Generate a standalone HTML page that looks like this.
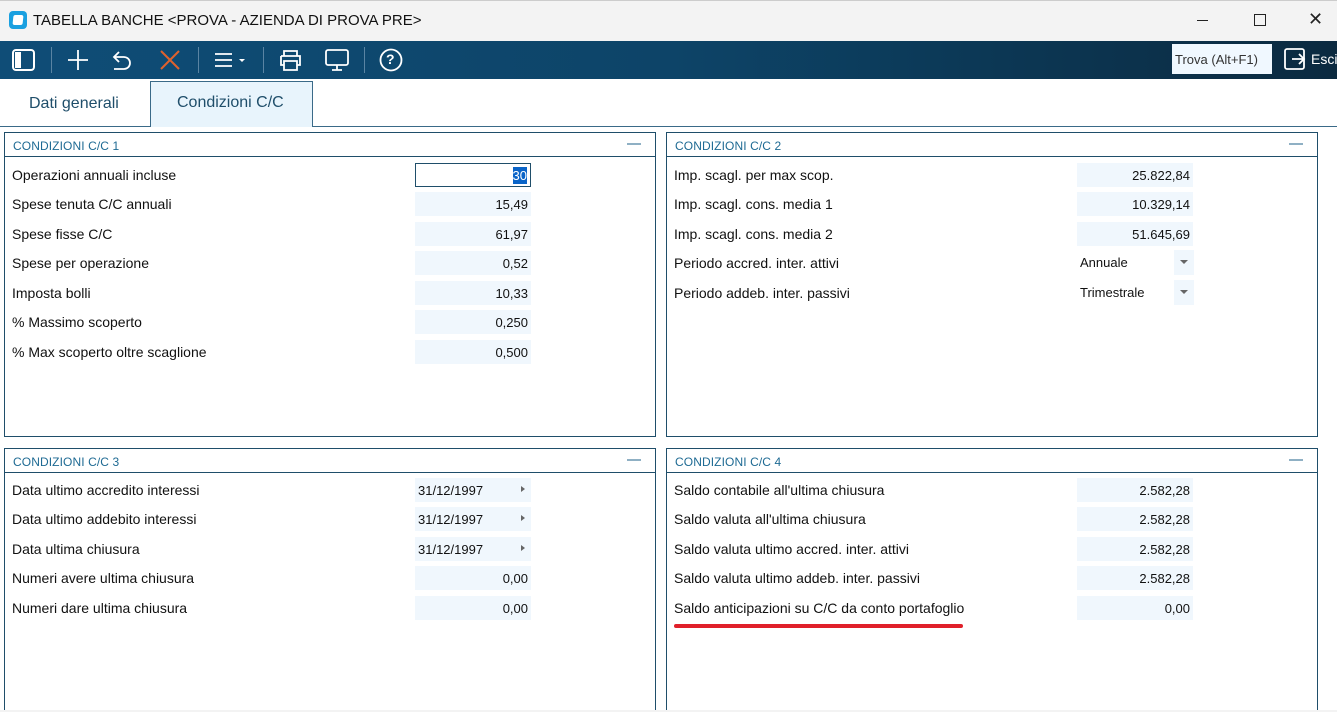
<!DOCTYPE html>
<html><head><meta charset="utf-8"><style>
*{margin:0;padding:0;box-sizing:border-box}
body{width:1337px;height:712px;overflow:hidden;background:#fff;font-family:"Liberation Sans",sans-serif;position:relative;color:#111}
.a{position:absolute}
.title{top:0;left:0;width:1337px;height:41px;background:#f3f3f3;border-top:1px solid #ccc}
.tb{top:41px;left:0;width:1337px;height:38px;background:linear-gradient(90deg,#0f4d77 0%,#0d4468 50%,#0b2a40 100%)}
.sep{top:47px;width:1px;height:26px;background:#5a84a3}
.panel{border:1px solid #1f4e6a;background:#fff}
.ph{position:absolute;left:0;right:0;top:0;height:24px;border-bottom:1px solid #1f4e6a;font-size:12px;color:#1e6a93;padding:6px 0 0 8px;letter-spacing:.1px}
.min{position:absolute;right:14px;top:10px;width:14px;height:2px;background:#8fb0c4}
.lbl{position:absolute;font-size:14px;color:#111;white-space:nowrap}
.inp{position:absolute;width:116px;height:24px;background:#f0f7fd;font-size:13px;text-align:right;padding:5px 3px 0 0}
.dd{position:absolute;font-size:13px;white-space:nowrap}
</style></head><body>
<div class="a title">
 <div class="a" style="left:9px;top:10px;width:18px;height:18px;border-radius:4px;background:#1aa0e0"><div class="a" style="left:4px;top:4px;width:10px;height:10px;border-radius:2px;background:#fff;transform:skewX(-6deg)"></div></div>
 <div class="a" style="left:33px;top:11px;font-size:15px;color:#111">TABELLA BANCHE &lt;PROVA - AZIENDA DI PROVA PRE&gt;</div>
 <div class="a" style="left:1197px;top:19px;width:11px;height:1px;background:#222"></div>
 <div class="a" style="left:1254px;top:13px;width:12px;height:12px;border:1px solid #222"></div>
 <div class="a" style="left:1308px;top:8px;font-size:18px;color:#222">✕</div>
</div>
<div class="a tb">
 <svg class="a" style="left:0;top:0" width="420" height="38" fill="none" stroke="#fff" stroke-width="2">
  <rect x="13" y="9" width="21" height="20" rx="3"/><rect x="15" y="11" width="6" height="16" fill="#fff" stroke="none"/>
  <path d="M68 19h20M78 9v20" stroke-width="1.8"/>
  <path d="M119 11l-5 5 5 5M114 16h10a6 6 0 010 12h-10" stroke-width="1.8"/>
  <path d="M161 10l18 18M179 10l-18 18" stroke="#e0622d" stroke-width="2"/>
  <path d="M215 13h17M215 19h17M215 25h17" stroke-width="1.8"/><path d="M239 18l3 3 3-3z" fill="#fff" stroke="none"/>
  <path d="M284 15v-5h13v5M281 15h19v9h-3M284 24h-3v-9M284 20h13v9h-13z" stroke-width="1.8"/>
  <rect x="326" y="9" width="22" height="15" rx="2" stroke-width="1.8"/><path d="M332 29h10M337 24v5" stroke-width="1.8"/>
  <circle cx="391" cy="19" r="10.5" stroke-width="1.8"/>
 </svg>
 <div class="a" style="left:386px;top:10px;font-size:14px;color:#fff;font-weight:bold">?</div>
 <div class="a sep" style="left:51px;top:6px"></div>
 <div class="a sep" style="left:198px;top:6px"></div>
 <div class="a sep" style="left:263px;top:6px"></div>
 <div class="a sep" style="left:364px;top:6px"></div>
 <div class="a" style="left:1172px;top:3px;width:100px;height:30px;background:#f0f8ff;font-size:13px;color:#333;padding:8px 0 0 3px">Trova (Alt+F1)</div>
 <svg class="a" style="left:1284px;top:6px" width="24" height="24" fill="none" stroke="#fff" stroke-width="1.8"><rect x="1" y="2" width="19" height="20" rx="2"/><path d="M8 12h12M15 7l5 5-5 5"/></svg>
 <div class="a" style="left:1311px;top:10px;font-size:14px;color:#fff">Esci</div>
</div>
<div class="a" style="left:0;top:126px;width:1337px;height:1px;background:#3a6a88"></div>
<div class="a" style="left:29px;top:95px;font-size:16px;color:#1f4e6a">Dati generali</div>
<div class="a" style="left:150px;top:81px;width:163px;height:46px;background:#e8f4fc;border:1px solid #3a6a88;border-bottom:none"></div>
<div class="a" style="left:177px;top:94px;font-size:16px;color:#1f4e6a">Condizioni C/C</div>

<div class="a panel" style="left:4px;top:132px;width:652px;height:305px"><div class="ph">CONDIZIONI C/C 1</div><div class="min"></div></div>
<div class="lbl" style="left:12px;top:167px">Operazioni annuali incluse</div>
<div class="inp" style="left:415px;top:163px;background:#fff;border:1px solid #1f4e6a;padding-top:4px"><span style="background:#0a64c8;color:#fff;padding:1px 0">30</span></div>
<div class="lbl" style="left:12px;top:196px">Spese tenuta C/C annuali</div><div class="inp" style="left:415px;top:192px">15,49</div>
<div class="lbl" style="left:12px;top:226px">Spese fisse C/C</div><div class="inp" style="left:415px;top:222px">61,97</div>
<div class="lbl" style="left:12px;top:255px">Spese per operazione</div><div class="inp" style="left:415px;top:251px">0,52</div>
<div class="lbl" style="left:12px;top:285px">Imposta bolli</div><div class="inp" style="left:415px;top:281px">10,33</div>
<div class="lbl" style="left:12px;top:314px">% Massimo scoperto</div><div class="inp" style="left:415px;top:310px">0,250</div>
<div class="lbl" style="left:12px;top:344px">% Max scoperto oltre scaglione</div><div class="inp" style="left:415px;top:340px">0,500</div>

<div class="a panel" style="left:666px;top:132px;width:652px;height:305px"><div class="ph">CONDIZIONI C/C 2</div><div class="min"></div></div>
<div class="lbl" style="left:674px;top:167px">Imp. scagl. per max scop.</div><div class="inp" style="left:1077px;top:163px">25.822,84</div>
<div class="lbl" style="left:674px;top:196px">Imp. scagl. cons. media 1</div><div class="inp" style="left:1077px;top:192px">10.329,14</div>
<div class="lbl" style="left:674px;top:226px">Imp. scagl. cons. media 2</div><div class="inp" style="left:1077px;top:222px">51.645,69</div>
<div class="lbl" style="left:674px;top:255px">Periodo accred. inter. attivi</div>
<div class="dd" style="left:1080px;top:255px">Annuale</div><div class="a" style="left:1174px;top:250px;width:20px;height:25px;background:#f0f7fd"></div><div class="a" style="left:1180px;top:260px;border:4px solid transparent;border-top:4px solid #666"></div>
<div class="lbl" style="left:674px;top:285px">Periodo addeb. inter. passivi</div>
<div class="dd" style="left:1080px;top:285px">Trimestrale</div><div class="a" style="left:1174px;top:280px;width:20px;height:25px;background:#f0f7fd"></div><div class="a" style="left:1180px;top:290px;border:4px solid transparent;border-top:4px solid #666"></div>

<div class="a panel" style="left:4px;top:448px;width:652px;height:263px"><div class="ph">CONDIZIONI C/C 3</div><div class="min"></div></div>
<div class="lbl" style="left:12px;top:482px">Data ultimo accredito interessi</div>
<div class="inp" style="left:415px;top:478px;text-align:left;padding-left:3px">31/12/1997<span class="a" style="left:106px;top:8px;border:3px solid transparent;border-left:4px solid #666"></span></div>
<div class="lbl" style="left:12px;top:511px">Data ultimo addebito interessi</div>
<div class="inp" style="left:415px;top:507px;text-align:left;padding-left:3px">31/12/1997<span class="a" style="left:106px;top:8px;border:3px solid transparent;border-left:4px solid #666"></span></div>
<div class="lbl" style="left:12px;top:541px">Data ultima chiusura</div>
<div class="inp" style="left:415px;top:537px;text-align:left;padding-left:3px">31/12/1997<span class="a" style="left:106px;top:8px;border:3px solid transparent;border-left:4px solid #666"></span></div>
<div class="lbl" style="left:12px;top:570px">Numeri avere ultima chiusura</div><div class="inp" style="left:415px;top:566px">0,00</div>
<div class="lbl" style="left:12px;top:600px">Numeri dare ultima chiusura</div><div class="inp" style="left:415px;top:596px">0,00</div>

<div class="a panel" style="left:666px;top:448px;width:652px;height:263px"><div class="ph">CONDIZIONI C/C 4</div><div class="min"></div></div>
<div class="lbl" style="left:674px;top:482px">Saldo contabile all'ultima chiusura</div><div class="inp" style="left:1077px;top:478px">2.582,28</div>
<div class="lbl" style="left:674px;top:511px">Saldo valuta all'ultima chiusura</div><div class="inp" style="left:1077px;top:507px">2.582,28</div>
<div class="lbl" style="left:674px;top:541px">Saldo valuta ultimo accred. inter. attivi</div><div class="inp" style="left:1077px;top:537px">2.582,28</div>
<div class="lbl" style="left:674px;top:570px">Saldo valuta ultimo addeb. inter. passivi</div><div class="inp" style="left:1077px;top:566px">2.582,28</div>
<div class="lbl" style="left:674px;top:600px">Saldo anticipazioni su C/C da conto portafoglio</div><div class="inp" style="left:1077px;top:596px">0,00</div>
<div class="a" style="left:674px;top:624px;width:289px;height:4px;border-radius:2px;background:#e0202a"></div>
<div class="a" style="left:0;top:710px;width:1337px;height:2px;background:#f3f3f3"></div>
</body></html>
